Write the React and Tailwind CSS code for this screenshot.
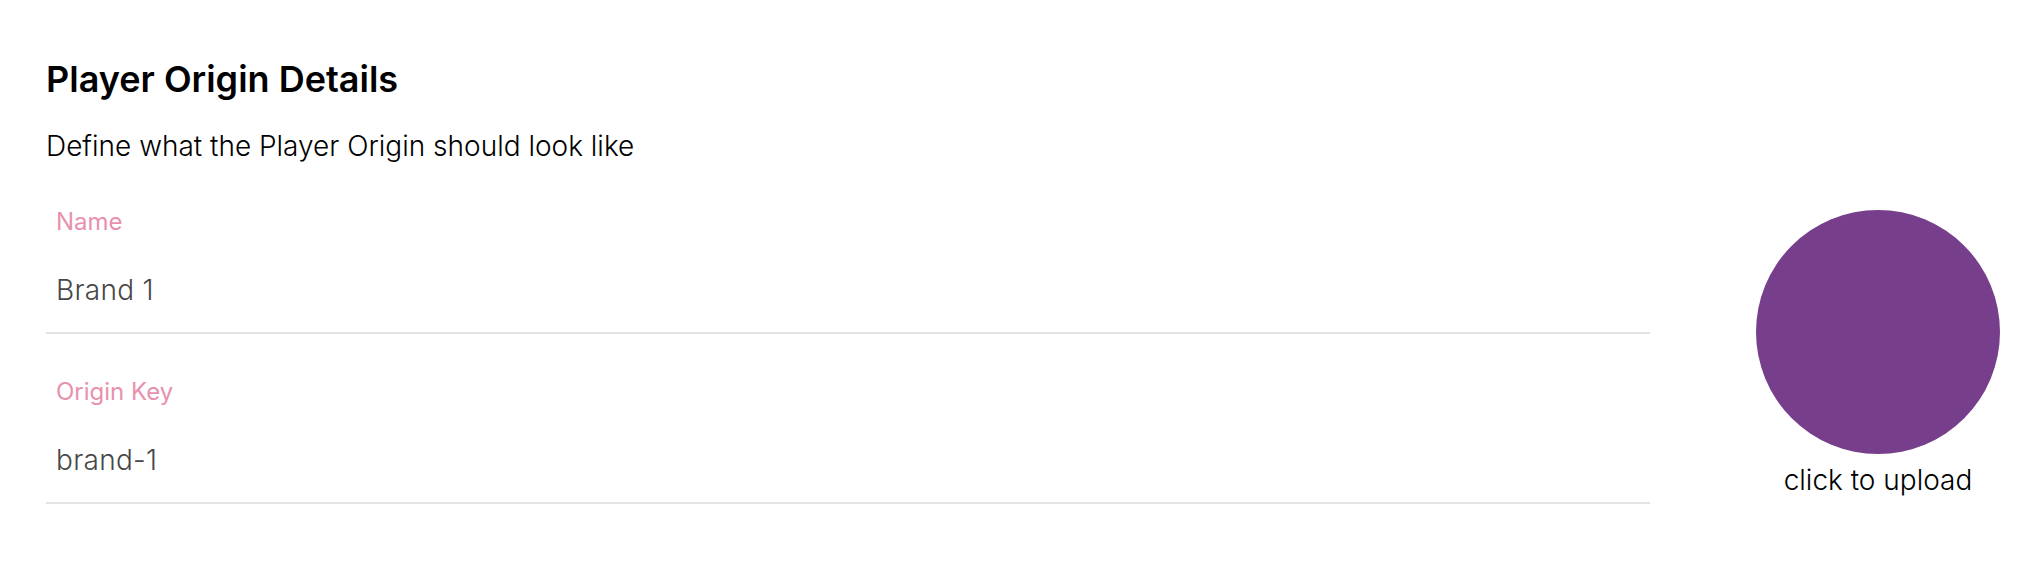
import React from "react";

function Field({ label, value, first }) {
  return (
    <div className={(first ? "pt-[44px]" : "pt-[43px]") + " pb-[25px] border-b-2 border-[#e3e3e3]"}>
      <div className="pl-[10px] text-[24px] leading-[normal] font-normal text-[#e891ad]">{label}</div>
      <div className="pl-[10px] mt-[37px] text-[28px] leading-[normal] font-light tracking-[0.01em] text-[#474747]">
        {value}
      </div>
    </div>
  );
}

export default function App() {
  return (
    <div className="min-h-[578px] w-[2042px] bg-white font-['Inter',sans-serif] text-black pl-[46px]">
      <div className="pt-[57px]">
        <h1 className="text-[36px] leading-[normal] font-semibold">Player Origin Details</h1>
        <p className="mt-[28px] text-[28px] leading-[normal] font-light">
          Define what the Player Origin should look like
        </p>
      </div>
      <div className="flex items-start">
        <div className="w-[1604px]">
          <Field label="Name" value="Brand 1" first />
          <Field label="Origin Key" value="brand-1" />
        </div>
        <div className="ml-[106px] mt-[47px] flex w-[244px] flex-col items-center">
          <div className="h-[244px] w-[244px] cursor-pointer rounded-full bg-[#773f8b]" />
          <span className="mt-[9px] whitespace-nowrap text-[28px] leading-[normal] font-light">
            click to upload
          </span>
        </div>
      </div>
    </div>
  );
}
